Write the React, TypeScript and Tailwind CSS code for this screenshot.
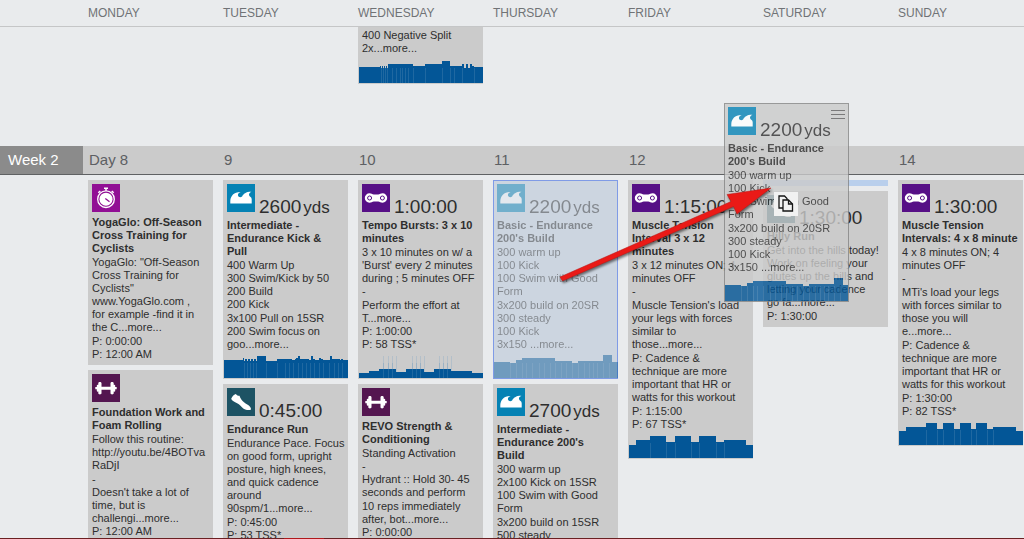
import type { ReactNode } from "react";
import { clsx } from "clsx";

type Sport = "swim" | "bike" | "run" | "strength" | "other";

type Bar = [width: number, height: number];

type Chart = {
  bars: Bar[];
  seams?: number[];
  spikes?: number[];
};

type Workout = {
  sport: Sport;
  value?: string;
  unit?: string;
  title: string;
  blocks: string[];
  chart?: Chart;
};

const days = ["MONDAY", "TUESDAY", "WEDNESDAY", "THURSDAY", "FRIDAY", "SATURDAY", "SUNDAY"];
const dayNumbers = ["Day 8", "9", "10", "11", "12", "", "14"];

const sportColors: Record<Sport, string> = {
  swim: "bg-[#0582b4]",
  bike: "bg-[#560f86]",
  run: "bg-[#1d5364]",
  strength: "bg-[#541650]",
  other: "bg-[#910f94]",
};

const negativeSplitChart: Chart = {
  bars: [
    [21, 16], [1, 17], [1, 15], [1, 17], [1, 15], [1, 17], [1, 15], [1, 17], [1, 15], [25, 19],
    [12, 17], [17, 19], [8, 22], [12, 17], [2, 19], [2, 15], [2, 19], [2, 15], [2, 19], [2, 17], [9, 16],
  ],
  seams: [22, 24, 26, 28, 33, 37, 41, 43, 46, 49, 54, 66, 83, 91, 95, 103, 115],
};

const kickPullChart: Chart = {
  bars: [
    [19, 18], [1, 20], [1, 17], [2, 19], [1, 17], [2, 19], [1, 17], [2, 19], [1, 17], [2, 19], [1, 17],
    [9, 22], [11, 17], [15, 19], [3, 18], [1, 19], [2, 20], [2, 22], [9, 19], [2, 18], [2, 22], [2, 19],
    [4, 18], [2, 20], [2, 19], [7, 18], [2, 22], [8, 19], [1, 18], [2, 19], [5, 18],
  ],
  seams: [20, 23, 26, 29, 32, 42, 53, 61, 65, 69, 74, 78, 82, 86, 90, 95, 99, 105, 110, 114, 118],
};

const tempoChart: Chart = {
  bars: [[10, 5], [10, 7], [17, 9], [10, 6], [18, 9], [10, 6], [17, 9], [21, 7], [11, 5]],
  seams: [24, 29, 33, 53, 57, 61, 80, 84, 88],
  spikes: [24, 29, 33, 37, 53, 57, 61, 65, 80, 84, 88, 92],
};

const basicChart: Chart = {
  bars: [[16, 16], [6, 15], [6, 18], [33, 20], [17, 17], [6, 15], [25, 17], [9, 23], [6, 16]],
  seams: [16, 22, 28, 32, 38, 45, 50, 56, 61, 67, 72, 78, 84, 90, 95, 99, 103, 109, 115],
};

const tensionChart: Chart = {
  bars: [[7, 13], [14, 18], [16, 22], [9, 16], [16, 22], [8, 16], [17, 22], [8, 16], [22, 18], [7, 13]],
  seams: [21, 37, 46, 62, 70, 87, 95],
};

const intervalsChart: Chart = {
  bars: [
    [7, 14], [20, 18], [11, 22], [6, 16], [11, 22], [6, 16], [11, 22], [5, 16], [11, 22], [6, 16], [23, 18], [7, 14],
  ],
  seams: [27, 38, 44, 55, 61, 72, 77, 88, 94],
};

const basicBuild: Workout = {
  sport: "swim",
  value: "2200",
  unit: "yds",
  title: "Basic - Endurance\n200's Build",
  blocks: ["300 warm up\n100 Kick\n100 Swim with Good\nForm", "3x200 build on 20SR\n300 steady\n100 Kick\n3x150 ...more..."],
  chart: basicChart,
};

const monday: Workout[] = [
  {
    sport: "other",
    title: "YogaGlo: Off-Season\nCross Training for\nCyclists",
    blocks: [
      'YogaGlo: "Off-Season\nCross Training for\nCyclists"\nwww.YogaGlo.com ,\nfor example -find it in\nthe C...more...',
      "P: 0:00:00\nP: 12:00 AM",
    ],
  },
  {
    sport: "strength",
    title: "Foundation Work and\nFoam Rolling",
    blocks: [
      "Follow this routine:\nhttp://youtu.be/4BOTva\nRaDjI",
      "-\nDoesn't take a lot of\ntime, but is\nchallengi...more...\nP: 12:00 AM",
    ],
  },
];

const tuesday: Workout[] = [
  {
    sport: "swim",
    value: "2600",
    unit: "yds",
    title: "Intermediate -\nEndurance Kick &\nPull",
    blocks: ["400 Warm Up\n300 Swim/Kick by 50\n200 Build\n200 Kick", "3x100 Pull on 15SR\n200 Swim focus on\ngoo...more..."],
    chart: kickPullChart,
  },
  {
    sport: "run",
    value: "0:45:00",
    title: "Endurance Run",
    blocks: [
      "Endurance Pace. Focus\non good form, upright\nposture, high knees,\nand quick cadence\naround\n90spm/1...more...",
      "P: 0:45:00\nP: 53 TSS*",
    ],
  },
];

const wednesday: Workout[] = [
  {
    sport: "bike",
    value: "1:00:00",
    title: "Tempo Bursts: 3 x 10\nminutes",
    blocks: [
      "3 x 10 minutes on w/ a\n'Burst' every 2 minutes\nduring ; 5 minutes OFF\n-",
      "Perform the effort at\nT...more...\nP: 1:00:00\nP: 58 TSS*",
    ],
    chart: tempoChart,
  },
  {
    sport: "strength",
    title: "REVO Strength &\nConditioning",
    blocks: [
      "Standing Activation\n-\nHydrant :: Hold 30- 45\nseconds and perform",
      "10 reps immediately\nafter, bot...more...\nP: 0:00:00\nP: 12:00 AM",
    ],
  },
];

const thursday: Workout[] = [
  {
    sport: "swim",
    value: "2700",
    unit: "yds",
    title: "Intermediate -\nEndurance 200's\nBuild",
    blocks: ["300 warm up\n2x100 Kick on 15SR\n100 Swim with Good\nForm", "3x200 build on 15SR\n500 steady\n100 Kick"],
  },
];

const friday: Workout[] = [
  {
    sport: "bike",
    value: "1:15:00",
    title: "Muscle Tension\nInterval 3 x 12\nminutes",
    blocks: [
      "3 x 12 minutes ON; 4\nminutes OFF\n-",
      "Muscle Tension's load\nyour legs with forces\nsimilar to\nthose...more...",
      "P: Cadence &\ntechnique are more\nimportant that HR or\nwatts for this workout",
      "P: 1:15:00\nP: 67 TSS*",
    ],
    chart: tensionChart,
  },
];

const saturday: Workout[] = [
  {
    sport: "run",
    value: "1:30:00",
    title: "Hilly Run",
    blocks: [
      "Get into the hills today!\nWork on feeling your\nglutes up the hills and\nletting your cadence\ngo fa...more...",
      "P: 1:30:00",
    ],
  },
];

const sunday: Workout[] = [
  {
    sport: "bike",
    value: "1:30:00",
    title: "Muscle Tension\nIntervals: 4 x 8 minute",
    blocks: [
      "4 x 8 minutes ON; 4\nminutes OFF\n-",
      "MTi's load your legs\nwith forces similar to\nthose you will\ne...more...",
      "P: Cadence &\ntechnique are more\nimportant that HR or\nwatts for this workout",
      "P: 1:30:00\nP: 82 TSS*",
    ],
    chart: intervalsChart,
  },
];

const sportGlyphs: Record<Sport, ReactNode> = {
  swim: (
    <path
      fill="#fff"
      d="M3.300 19.600V17C3.600 12 7 8 13.600 8.100c-2 .8-2.900 2-2.600 3.400.4 1.600 2.500 2.200 4.100 1 1.300-2.800 4-4.900 9.300-4.800-2 1-2.700 2.300-2.300 3.600.4 1.500 2.600 1.700 2.600 4v4.300z"
    />
  ),
  bike: (
    <>
      <path
        fill="#fff"
        d="M7.500 9.300c1.700 0 2.800 1.200 4.300 1.200h4.400c1.500 0 2.600-1.200 4.300-1.200a4.700 4.700 0 0 1 0 9.400c-1.700 0-2.800-1.300-4.300-1.300h-4.400c-1.500 0-2.600 1.300-4.300 1.300a4.700 4.700 0 0 1 0-9.400z"
      />
      <circle cx="7.600" cy="14" r="2" fill="none" stroke="#560f86" />
      <circle cx="20.400" cy="14" r="2" fill="none" stroke="#560f86" />
    </>
  ),
  run: (
    <path
      fill="#fff"
      d="M4.200 10.800c1-2.400 2.400-4 4.600-4.800 1.200 1.500 2.200 2 3.700 1.700.9 2.700 2.500 4.800 4.500 6.600 2 1.800 4.700 2.700 6.200 4.600 1.300 1.600.9 3.100-.8 3.200-3 .1-5.300-.8-7.200-2.700-2.300-2.300-4.300-4.200-7-5.200-1.900-.7-3.200-1.700-4-3.400z"
    />
  ),
  strength: (
    <path
      fill="#fff"
      d="M3.300 13.100h1.500v-1.700c0-.7.9-.9 1.500-.6V9.200c0-1.500 3.200-1.500 3.200 0v3.500h9V9.200c0-1.500 3.200-1.500 3.200 0v1.600c.6-.3 1.500-.1 1.500.6v1.700h1.500v2.200h-1.500V17c0 .7-.9.900-1.500.6v1.700c0 1.500-3.200 1.500-3.200 0v-3.500h-9v3.500c0 1.500-3.200 1.500-3.200 0v-1.700c-.6.3-1.500.1-1.500-.6v-1.700H3.300z"
    />
  ),
  other: (
    <g fill="none" stroke="#fff">
      <circle cx="14" cy="15.200" r="8.300" strokeWidth="1.300" />
      <circle cx="14" cy="15.200" r="6.500" fill="#fff" stroke="none" />
      <path d="M12 4.300h4M14 4.300v2.500M6.300 8.800l2-1.800M21.700 8.800l-2-1.800" strokeWidth="1.500" />
      <path d="m13.300 14.500 4.200 3.200" stroke="#910f94" strokeWidth="1.300" />
    </g>
  ),
};

function SportIcon({ sport }: { sport: Sport }) {
  return (
    <svg viewBox="0 0 28 28" className={clsx("h-7 w-7 shrink-0", sportColors[sport])} aria-hidden="true">
      {sportGlyphs[sport]}
    </svg>
  );
}

function IntensityChart({ bars, seams = [], spikes = [] }: Chart) {
  let x = 0;
  return (
    <svg viewBox="0 0 124 27" preserveAspectRatio="none" className="block h-[27px] w-full" aria-hidden="true">
      {spikes.map((s) => (
        <rect key={s} x={s} y={5} width={1} height={22} fill="#b3bfc9" />
      ))}
      <g fill="#035697" shapeRendering="crispEdges">
        {bars.map(([width, height], i) => {
          const left = x;
          x += width;
          return <rect key={i} x={left} y={27 - height} width={width} height={height} />;
        })}
      </g>
      {seams.map((s) => (
        <rect key={s} x={s} y={12} width={1} height={15} fill="#5f93bb" opacity={0.3} />
      ))}
    </svg>
  );
}

function WorkoutBody({ workout }: { workout: Workout }) {
  const { sport, value, unit, title, blocks, chart } = workout;
  return (
    <>
      <div className="flex flex-col gap-px px-1 pt-1">
        <div className={clsx("flex items-start gap-1", value ? "h-[34px]" : "h-[31px]")}>
          <SportIcon sport={sport} />
          {value && (
            <p className="mt-[13px] text-[19px] leading-5 whitespace-nowrap">
              {value}
              {unit && <span className="ml-0.5 text-[17px]">{unit}</span>}
            </p>
          )}
        </div>
        <h3 className="font-bold whitespace-pre">{title}</h3>
        {blocks.map((block, i) => (
          <p key={i} className="whitespace-pre">
            {block}
          </p>
        ))}
      </div>
      {chart ? (
        <div className="pl-px">
          <IntensityChart {...chart} />
        </div>
      ) : (
        <div className="h-[3px]" />
      )}
    </>
  );
}

function WorkoutCard({ workout }: { workout: Workout }) {
  return (
    <article className="overflow-hidden bg-[#cbcbcb] pb-px">
      <WorkoutBody workout={workout} />
    </article>
  );
}

function DayColumn({ workouts, children }: { workouts: Workout[]; children?: ReactNode }) {
  return (
    <section className="flex min-w-0 flex-col gap-[5px]">
      {children}
      {workouts.map((workout) => (
        <WorkoutCard key={workout.title} workout={workout} />
      ))}
    </section>
  );
}

function DragArrow() {
  return (
    <svg
      viewBox="0 0 224 104"
      className="pointer-events-none absolute top-[182px] left-[554px] h-[104px] w-[224px] drop-shadow-[1px_2px_1px_rgba(0,0,0,0.5)]"
      aria-hidden="true"
    >
      <path d="M6 95 177 19.500 173 12.500 217 6 183 32 179.500 24.500 8.500 99z" fill="#ea1a17" stroke="#b51614" strokeWidth="0.500" />
    </svg>
  );
}

function CopyCursor() {
  return (
    <div className="absolute top-[192px] left-[774px] h-6 w-6 bg-[#f1f1f1]">
      <svg viewBox="0 0 24 24" className="h-6 w-6" fill="#f1f1f1" stroke="#151515" strokeWidth="1.300" aria-hidden="true">
        <path d="M5 4h5.500L13 6.500V16H5z" />
        <path d="M9 8h5.500L18.500 12v7H9z" />
        <path d="M14.500 8v4h4" fill="none" />
      </svg>
    </div>
  );
}

export default function App() {
  return (
    <div className="relative flex h-screen flex-col overflow-hidden bg-[#e9ebed] font-['Liberation_Sans',Arial,sans-serif] text-[11px] leading-[13px] text-[#2e2e2e]">
      <header className="grid h-[27px] shrink-0 grid-cols-7 gap-2.5 border-b border-[#c5c6c7] pr-px pl-[88px] text-[12px] leading-[26px] text-[#707376]">
        {days.map((day) => (
          <span key={day}>{day}</span>
        ))}
      </header>

      {/* Tail end of the previous week */}
      <div className="grid h-[119px] shrink-0 grid-cols-7 items-start gap-2.5 pr-px pl-[88px]">
        <article className="col-start-3 bg-[#cbcbcb] pb-px">
          <p className="px-1 pt-0.5 pb-px whitespace-pre">{"400 Negative Split\n2x...more..."}</p>
          <div className="pl-px">
            <IntensityChart {...negativeSplitChart} />
          </div>
        </article>
      </div>

      <div className="flex h-[29px] shrink-0 border-b border-[#5f6163] bg-[#cbcbcb] text-[15px] leading-7">
        <h2 className="w-[83px] shrink-0 bg-[#8b8b8b] pl-2 text-white">Week 2</h2>
        <div className="grid grow grid-cols-7 gap-2.5 pl-1.5 text-[#5d6063]">
          {dayNumbers.map((label, i) => (
            <span key={i}>{label}</span>
          ))}
        </div>
      </div>

      <main className="grid min-h-0 grow grid-cols-7 items-start gap-2.5 overflow-hidden pt-[5px] pr-px pl-[88px]">
        <DayColumn workouts={monday} />
        <DayColumn workouts={tuesday} />
        <DayColumn workouts={wednesday} />
        <DayColumn workouts={thursday}>
          <article className="bg-[#ccd5e0] outline-1 -outline-offset-1 outline-[#7f9be6]">
            <div className="pb-px opacity-45">
              <WorkoutBody workout={basicBuild} />
            </div>
          </article>
        </DayColumn>
        <DayColumn workouts={friday} />
        <DayColumn workouts={saturday}>
          <div className="h-1.5 bg-[#b9cfec]" />
        </DayColumn>
        <DayColumn workouts={sunday} />
      </main>

      <footer className="flex h-px shrink-0 bg-[#6a2022]">
        <div className="ml-[284px] w-10 bg-[#b0191c]" />
      </footer>

      {/* Card being dragged over Saturday */}
      <article className="absolute top-[103px] left-[724px] w-[125px] bg-[#cbcbcb] pb-px opacity-80 outline-1 -outline-offset-1 outline-[#858585]">
        <WorkoutBody workout={basicBuild} />
        <button type="button" aria-label="Workout menu" className="absolute top-[7px] right-1 flex w-3.5 flex-col gap-[3px]">
          <span className="h-px w-full bg-[#5f5f5f]" />
          <span className="h-px w-full bg-[#5f5f5f]" />
          <span className="h-px w-full bg-[#5f5f5f]" />
        </button>
      </article>

      <DragArrow />
      <CopyCursor />
    </div>
  );
}
